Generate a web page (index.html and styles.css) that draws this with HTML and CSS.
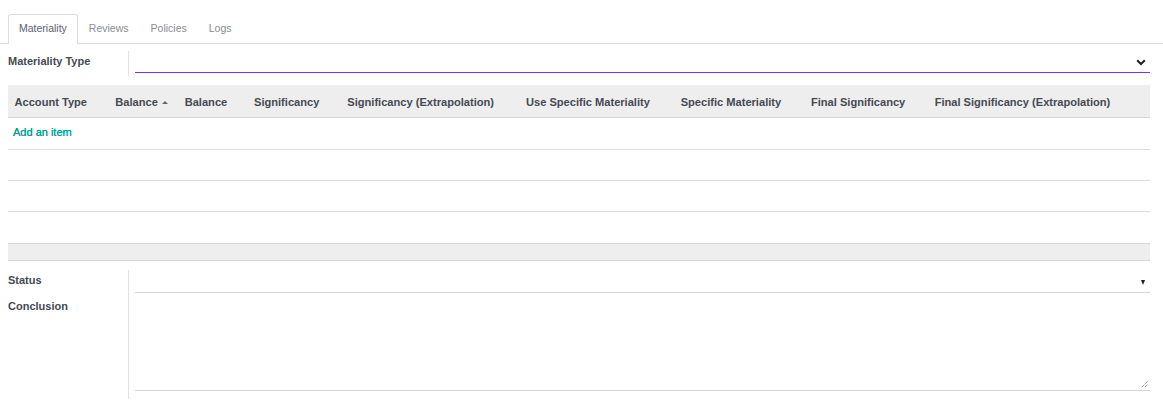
FILE: index.html
```html
<!DOCTYPE html>
<html>
<head>
<meta charset="utf-8">
<link rel="stylesheet" href="styles.css">
</head>
<body>
<div class="tabs">
  <div class="tab active">Materiality</div>
  <div class="tab">Reviews</div>
  <div class="tab">Policies</div>
  <div class="tab">Logs</div>
</div>
<div class="sheet">
  <div class="field-row">
    <div class="label">Materiality Type</div>
    <div class="value">
      <div class="select focus">
        <svg class="chev" width="10" height="7" viewBox="0 0 10 7"><path d="M1.2 1.3 L5 5 L8.8 1.3" fill="none" stroke="#222" stroke-width="2"/></svg>
      </div>
    </div>
  </div>

  <div class="table">
    <div class="thead">
      <div class="th c1">Account Type</div>
      <div class="th c2">Balance <span class="caret"></span></div>
      <div class="th c3">Balance</div>
      <div class="th c4">Significancy</div>
      <div class="th c5">Significancy (Extrapolation)</div>
      <div class="th c6">Use Specific Materiality</div>
      <div class="th c7">Specific Materiality</div>
      <div class="th c8">Final Significancy</div>
      <div class="th c9">Final Significancy (Extrapolation)</div>
    </div>
    <div class="row first"><a class="add">Add an item</a></div>
    <div class="row"></div>
    <div class="row"></div>
    <div class="row last"></div>
    <div class="tfoot"></div>
  </div>

  <div class="group">
    <div class="label">Status</div>
    <div class="value">
      <div class="select plain">
        <span class="tri"></span>
      </div>
    </div>
    <div class="label second">Conclusion</div>
    <div class="value bottom">
      <div class="textarea">
        <svg class="grip" width="8" height="8" viewBox="0 0 8 8"><path d="M1 7 L7 1 M4 7 L7 4" stroke="#777" stroke-width="1" stroke-dasharray="1 1" fill="none"/></svg>
      </div>
    </div>
  </div>
</div>
</body>
</html>
```
FILE: styles.css
```css
* { box-sizing: border-box; }
body {
  margin: 0;
  font-family: "Liberation Sans", Arial, sans-serif;
  font-size: 11px;
  color: #454a52;
  background: #fff;
}
.tabs {
  display: flex;
  padding: 14px 0 0 8px;
  border-bottom: 1px solid #dedede;
  height: 44px;
}
.tab {
  height: 30px;
  line-height: 27px;
  padding: 0 10px;
  border: 1px solid transparent;
  border-bottom: none;
  font-size: 10.5px;
  color: #8a8d92;
}
.tab.active {
  border-color: #dedede;
  border-radius: 3px 3px 0 0;
  background: #fff;
  color: #5b6372;
}
.sheet {
  padding: 0 13px 0 8px;
}
.field-row {
  display: flex;
  margin-top: 7px;
}
.label {
  width: 120px;
  font-weight: bold;
  line-height: 20px;
  color: #454a52;
}
.value {
  flex: 1;
  border-left: 1px solid #e2e2e2;
  padding-left: 6px;
}
.field-row .value { height: 25px; }
.select {
  display: flex;
  justify-content: flex-end;
  align-items: center;
  height: 22px;
}
.select.focus { border-bottom: 1px solid #6a42c2; }
.chev { margin-right: 4px; margin-top: 2px; }
.select.plain { border-bottom: 1px solid #d6d6d6; height: 23px; }
.tri {
  width: 0; height: 0;
  border-left: 2.5px solid transparent;
  border-right: 2.5px solid transparent;
  border-top: 5px solid #222;
  margin-right: 5px;
  margin-top: 2px;
}
.table { margin-top: 9px; }
.thead {
  display: grid;
  grid-template-columns: 100.8px 69.4px 69.3px 93.3px 178.7px 154.7px 130.3px 123.7px 1fr;
  background: #eeeeee;
  height: 33px;
  border-bottom: 1px solid #d6d6d6;
}
.th {
  padding-left: 6.5px;
  padding-top: 1px;
  font-weight: bold;
  font-size: 11.1px;
  line-height: 32px;
  white-space: nowrap;
}
.caret {
  display: inline-block;
  width: 0; height: 0;
  border-left: 3px solid transparent;
  border-right: 3px solid transparent;
  border-bottom: 3px solid #666;
  vertical-align: middle;
  margin-left: 1px;
  margin-top: -2px;
}
.row {
  height: 31px;
  border-bottom: 1px solid #dedede;
}
.row.first { height: 32px; padding-left: 5px; line-height: 29px; }
.row.last { height: 31px; border-bottom: none; }
.add { color: #00a09d; cursor: pointer; text-shadow: 0 0 0.3px #00a09d; }
.tfoot {
  height: 18px;
  background: #eeeeee;
  border-top: 1px solid #d6d6d6;
  border-bottom: 1px solid #d6d6d6;
}
.group {
  display: grid;
  grid-template-columns: 120px 1fr;
  margin-top: 9px;
}
.group .label { width: auto; }
.group .label.second { padding-top: 3px; }
.value.bottom { padding-bottom: 8px; }
.textarea {
  height: 98px;
  border-bottom: 1px solid #d6d6d6;
  display: flex;
  justify-content: flex-end;
  align-items: flex-end;
}
.grip { margin: 0 1px 2px 0; }
```
